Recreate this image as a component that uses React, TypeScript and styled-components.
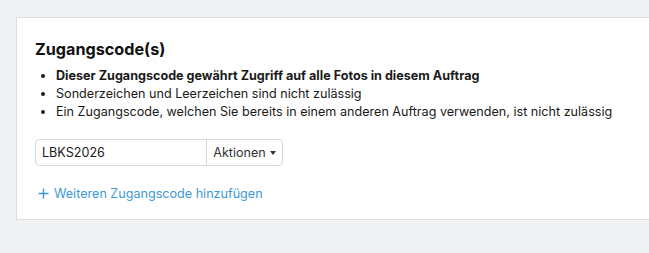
import styled, { createGlobalStyle } from "styled-components";

const GlobalStyle = createGlobalStyle`
  body {
    margin: 0;
    background: #f0f1f3;
    font-family: Inter, "Noto Sans", sans-serif;
    color: #1a1a1a;
  }
`;

const rules = [
  { text: "Dieser Zugangscode gewährt Zugriff auf alle Fotos in diesem Auftrag", strong: true },
  { text: "Sonderzeichen und Leerzeichen sind nicht zulässig", strong: false },
  { text: "Ein Zugangscode, welchen Sie bereits in einem anderen Auftrag verwenden, ist nicht zulässig", strong: false },
];

export default function App() {
  return (
    <>
      <GlobalStyle />
      <Page>
        <Card>
          <Title>Zugangscode(s)</Title>
          <Rules>
            {rules.map((r) => (
              <Rule key={r.text} $strong={r.strong}>{r.text}</Rule>
            ))}
          </Rules>
          <InputGroup>
            <CodeInput defaultValue="LBKS2026" />
            <ActionsButton>
              Aktionen <Caret />
            </ActionsButton>
          </InputGroup>
          <AddLink href="#">
            <svg width="11" height="11" viewBox="0 0 11 11">
              <path d="M5.5 0.5v10M0.5 5.5h10" stroke="currentColor" strokeWidth="1.4" />
            </svg>
            Weiteren Zugangscode hinzufügen
          </AddLink>
        </Card>
      </Page>
    </>
  );
}

const Page = styled.div`
  padding: 17px 0 0 16px;
  height: 253px;
  box-sizing: border-box;
  overflow: hidden;
`;

const Card = styled.div`
  background: #fff;
  border: 1px solid #dcdddf;
  border-right: none;
  padding: 20px 18px 20px 18px;
  height: 203px;
  box-sizing: border-box;
`;

const Title = styled.h2`
  margin: 0 0 7px;
  font-size: 16.2px;
  font-weight: 700;
  line-height: 22px;
  color: #111;
`;

const Rules = styled.ul`
  margin: 0 0 18px;
  padding-left: 21px;
  font-size: 12.6px;
  line-height: 18px;
`;

const Rule = styled.li<{ $strong: boolean }>`
  font-weight: ${(p) => (p.$strong ? 700 : 400)};
  color: #1a1a1a;
`;

const InputGroup = styled.div`
  display: flex;
  width: 248px;
  height: 27px;
`;

const CodeInput = styled.input`
  flex: 1;
  min-width: 0;
  border: 1px solid #d6d8db;
  border-radius: 4px 0 0 4px;
  padding: 0 6px;
  font-family: inherit;
  font-size: 12.6px;
  color: #1a1a1a;
  outline: none;
`;

const ActionsButton = styled.button`
  display: flex;
  align-items: center;
  gap: 4px;
  width: 77px;
  justify-content: center;
  border: 1px solid #d6d8db;
  border-radius: 0 4px 4px 0;
  margin-left: -1px;
  background: #fff;
  padding: 0 6px;
  font-family: inherit;
  font-size: 12.6px;
  color: #333;
`;

const Caret = styled.span`
  width: 0;
  height: 0;
  border-left: 3.5px solid transparent;
  border-right: 3.5px solid transparent;
  border-top: 4px solid #333;
`;

const AddLink = styled.a`
  display: inline-flex;
  align-items: center;
  gap: 5px;
  margin-top: 20px;
  margin-left: 3px;
  font-size: 12.6px;
  color: #3d9ad6;
  text-decoration: none;
`;
